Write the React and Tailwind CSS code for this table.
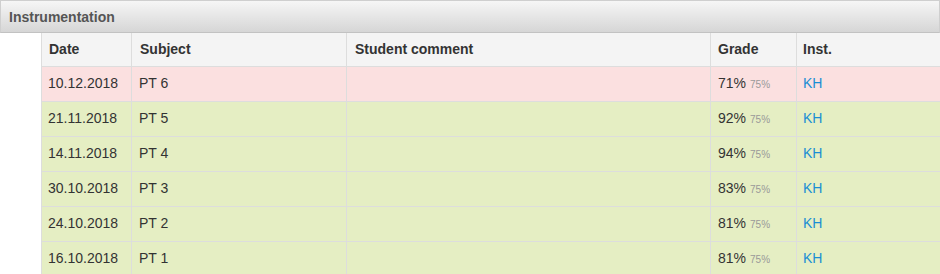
const rows = [
  { date: "10.12.2018", subject: "PT 6", grade: "71%", fail: true },
  { date: "21.11.2018", subject: "PT 5", grade: "92%" },
  { date: "14.11.2018", subject: "PT 4", grade: "94%" },
  { date: "30.10.2018", subject: "PT 3", grade: "83%" },
  { date: "24.10.2018", subject: "PT 2", grade: "81%" },
  { date: "16.10.2018", subject: "PT 1", grade: "81%" },
];

const cols = "grid grid-cols-[90px_215px_364px_86px_1fr]";

export default function App() {
  return (
    <div
      className="w-[940px] h-[274px] overflow-hidden bg-white text-[14px] text-[#333]"
      style={{ fontFamily: '"Liberation Sans", Arial, sans-serif' }}
    >
      {/* Panel title */}
      <div className="h-[33px] border border-[#cfcfcf] border-b-[#c2c2c2] bg-gradient-to-b from-[#f6f6f6] to-[#d6d6d6] flex items-center pl-[8px] pt-[1px] font-bold text-[#555]">
        Instrumentation
      </div>

      <div className="ml-[41px] w-[1000px]">
        <div className={`${cols} h-[34px] bg-[#f4f4f4] font-bold`}>
          <div className="border-l border-b border-[#dddddd] flex items-center px-[7px]">Date</div>
          <div className="border-l border-b border-[#dddddd] flex items-center px-[8px]">Subject</div>
          <div className="border-l border-b border-[#dddddd] flex items-center px-[8px]">Student comment</div>
          <div className="border-l border-b border-[#dddddd] flex items-center px-[7px]">Grade</div>
          <div className="border-l border-b border-[#dddddd] flex items-center px-[6px]">Inst.</div>
        </div>

        {rows.map((r) => (
          <div
            key={r.date}
            className={`${cols} h-[35px] ${r.fail ? "bg-[#fbe0e0]" : "bg-[#e5eec3]"}`}
          >
            <div className="border-l border-b border-[#dddddd] flex items-center pb-[1px] px-[6px]">{r.date}</div>
            <div className="border-l border-b border-[#dddddd] flex items-center pb-[1px] px-[7px]">{r.subject}</div>
            <div className="border-l border-b border-[#dddddd]"></div>
            <div className="border-l border-b border-[#dddddd] flex items-center pb-[1px] px-[7px]">
              <span>{r.grade}</span>
              <span className="ml-[4px] text-[10px] text-[#999] mt-[2px]">75%</span>
            </div>
            <div className="border-l border-b border-[#dddddd] flex items-center pb-[1px] px-[6px]">
              <a className="text-[#1a8ed4]">KH</a>
            </div>
          </div>
        ))}
      </div>
    </div>
  );
}
